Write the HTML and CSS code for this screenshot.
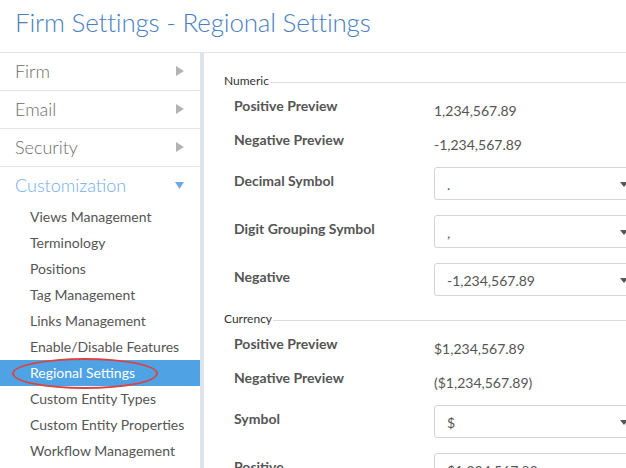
FILE: index.html
```html
<!DOCTYPE html>
<html>
<head>
<meta charset="utf-8">
<link rel="stylesheet" href="styles.css">
</head>
<body>
<div class="page">
  <header class="header"><h1 class="title">Firm Settings - Regional Settings</h1></header>
  <div class="main">
    <nav class="sidebar">
      <div class="nav-item"><span>Firm</span><svg class="caret" width="8" height="10" viewBox="0 0 8 10"><polygon points="0,0 8,5 0,10" fill="#b3b3b3"/></svg></div>
      <div class="nav-item"><span>Email</span><svg class="caret" width="8" height="10" viewBox="0 0 8 10"><polygon points="0,0 8,5 0,10" fill="#b3b3b3"/></svg></div>
      <div class="nav-item"><span>Security</span><svg class="caret" width="8" height="10" viewBox="0 0 8 10"><polygon points="0,0 8,5 0,10" fill="#b3b3b3"/></svg></div>
      <div class="nav-item open"><span>Customization</span><svg class="caret down" width="9" height="7" viewBox="0 0 9 7"><polygon points="0,0 9,0 4.5,7" fill="#6fa9ea"/></svg></div>
      <ul class="sub">
        <li>Views Management</li>
        <li>Terminology</li>
        <li>Positions</li>
        <li>Tag Management</li>
        <li>Links Management</li>
        <li>Enable/Disable Features</li>
        <li class="active"><span class="ring"></span>Regional Settings</li>
        <li>Custom Entity Types</li>
        <li>Custom Entity Properties</li>
        <li>Workflow Management</li>
      </ul>
    </nav>
    <div class="divider"></div>
    <section class="content">
      <div class="group">
        <div class="legend"><span>Numeric</span><i class="rule"></i></div>
        <div class="row preview"><div class="label">Positive Preview</div><div class="value">1,234,567.89</div></div>
        <div class="row preview"><div class="label">Negative Preview</div><div class="value">-1,234,567.89</div></div>
        <div class="row field"><div class="label">Decimal Symbol</div><div class="select">.</div></div>
        <div class="row field"><div class="label">Digit Grouping Symbol</div><div class="select">,</div></div>
        <div class="row field"><div class="label">Negative</div><div class="select">-1,234,567.89</div></div>
      </div>
      <div class="group">
        <div class="legend"><span>Currency</span><i class="rule"></i></div>
        <div class="row preview"><div class="label">Positive Preview</div><div class="value">$1,234,567.89</div></div>
        <div class="row preview"><div class="label">Negative Preview</div><div class="value">($1,234,567.89)</div></div>
        <div class="row field"><div class="label">Symbol</div><div class="select">$</div></div>
        <div class="row field"><div class="label">Positive</div><div class="select">$1,234,567.89</div></div>
      </div>
    </section>
  </div>
</div>
</body>
</html>
```
FILE: styles.css
```css
* { box-sizing: border-box; }
html, body { margin: 0; padding: 0; }
body {
  width: 626px;
  height: 468px;
  overflow: hidden;
  background: #fff;
  font-family: Lato, "Open Sans", sans-serif;
  color: #555;
}
.page { display: flex; flex-direction: column; height: 468px; }
.header {
  height: 53px;
  flex: 0 0 53px;
  border-bottom: 1px solid #e3e6e9;
  padding: 0 0 0 15px;
}
.title {
  margin: 0;
  padding-top: 4px;
  font-size: 26px;
  letter-spacing: -0.2px;
  line-height: 36px;
  font-weight: 300;
  color: #4a7fc0;
}
.main { display: flex; flex: 1; min-height: 0; }
.sidebar { width: 200px; flex: 0 0 200px; }
.divider { width: 4px; flex: 0 0 4px; background: #dde3ea; }
.nav-item {
  height: 38px;
  display: flex;
  align-items: center;
  justify-content: space-between;
  padding: 0 16px 1px 15px;
  border-bottom: 1px solid #e3e6e9;
  font-size: 18px;
  font-weight: 300;
  color: #6c6c6c;
}
.nav-item.open { border-bottom: none; height: 37px; color: #72aded; }
.sub { list-style: none; margin: 0; padding: 0; }
.sub li {
  position: relative;
  height: 26px;
  line-height: 26px;
  padding-left: 30px;
  font-size: 14px;
  color: #555;
}
.sub li.active { background: #4fa3e4; color: #fff; }
.ring {
  position: absolute;
  left: 12px;
  top: -2px;
  width: 146px;
  height: 31px;
  border: 2.5px solid #dc4340;
  border-radius: 50%;
}
.content {
  flex: 1;
  min-width: 0;
  overflow: hidden;
  padding: 21px 0 0 20px;
}
.group + .group { margin-top: 16px; }
.legend {
  display: flex;
  align-items: center;
  height: 14px;
  line-height: 14px;
  font-size: 12px;
  color: #333;
  margin-bottom: 8px;
  white-space: nowrap;
}
.legend .rule {
  flex: 1;
  height: 1px;
  background: #dcdcdc;
  margin-top: 3px;
  margin-left: 1px;
}
.row { display: flex; padding-left: 10px; }
.label {
  flex: 0 0 200px;
  font-size: 14px;
  line-height: 20px;
  font-weight: 700;
  color: #555;
}
.preview { height: 34px; }
.preview .value { padding-top: 5px; font-size: 14px; line-height: 20px; color: #555; }
.field { margin-top: 3px; margin-bottom: 15px; }
.field .label { padding-top: 4px; }
.select {
  position: relative;
  flex: 0 0 200px;
  height: 33px;
  border: 1px solid #d4d4d4;
  border-radius: 3px;
  padding: 7px 12px 4px;
  font-size: 14px;
  line-height: 20px;
  color: #555;
}
.select::after {
  content: "";
  position: absolute;
  right: 5px;
  top: 14px;
  border-left: 4px solid transparent;
  border-right: 4px solid transparent;
  border-top: 5px solid #555;
}
```
